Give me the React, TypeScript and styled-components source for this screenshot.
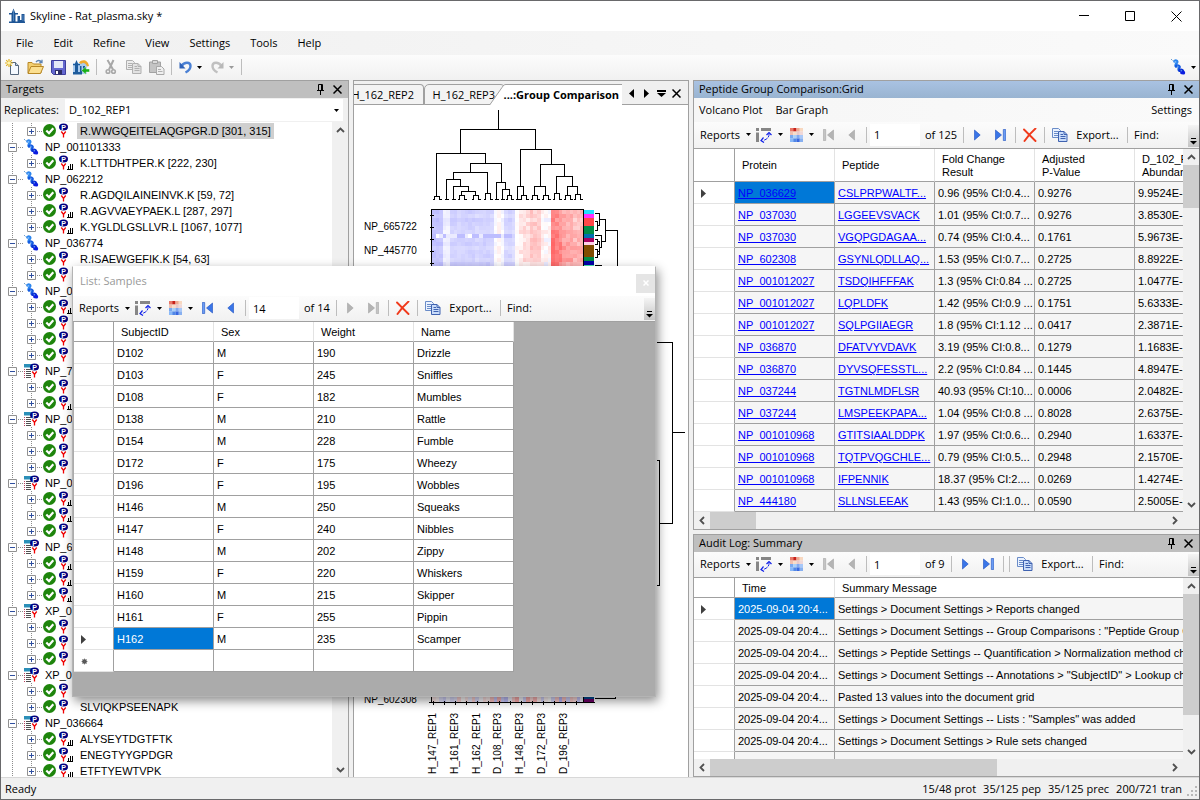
import React from 'react';
import styled, { createGlobalStyle, css } from 'styled-components';

const UI = '"Open Sans", "Noto Sans", sans-serif';
const GRID = '"Liberation Sans", Arial, sans-serif';
const LINE = '#a0a0a0';

const GlobalStyle = createGlobalStyle`
  *, *::before, *::after { box-sizing: border-box; }
  body { margin: 0; background: #fff; font-family: ${UI}; font-size: 11px; line-height: 16px; color: #000; }
  button, input, select { font: inherit; color: inherit; border: 0; border-radius: 0; margin: 0; padding: 0; background: none; }
  svg { display: block; flex: none; }
`;

/* ---------- window frame ---------- */

const Window = styled.div`
  position: relative;
  display: flex;
  flex-direction: column;
  height: 100vh;
  border: 1px solid #69696b;
  background: #f0f0f0;
  overflow: hidden;
`;

const TitleBar = styled.header`
  display: flex;
  align-items: center;
  height: 30px;
  padding-left: 8px;
  background: #fff;
  flex: none;
`;

const AppTitle = styled.h1`
  flex: 1;
  margin: 0 0 0 5px;
  font-size: 11px;
  font-weight: 400;
`;

const CaptionButton = styled.button`
  display: grid;
  place-items: center;
  width: 46px;
  height: 30px;
`;

const MenuBar = styled.nav`
  display: flex;
  align-items: center;
  gap: 20px;
  height: 24px;
  padding-left: 15px;
  background: linear-gradient(90deg, #f0f0f0, #fafafa);
  flex: none;
`;

const ToolStrip = styled.div`
  display: flex;
  align-items: center;
  height: 25px;
  padding-bottom: 1px;
  background: linear-gradient(#fcfcfc, #f1f1f1);
  flex: none;
`;

const Workspace = styled.main`
  display: grid;
  grid-template-columns: minmax(0, 348fr) minmax(0, 336fr) minmax(0, 506fr);
  gap: 4px;
  flex: 1;
  min-height: 0;
`;

const StatusBar = styled.footer`
  display: flex;
  align-items: center;
  gap: 7px;
  height: 22px;
  padding: 0 1px 0 4px;
  border-top: 1px solid #d8d8d8;
  background: #f0f0f0;
  flex: none;
  svg { margin: 6px 0 0 -2px; }
`;

const StatusMain = styled.span`
  flex: 1;
`;

/* ---------- tool buttons ---------- */

const ToolButton = styled.button<{ $w?: number }>`
  display: flex;
  align-items: center;
  justify-content: center;
  gap: 5px;
  width: ${(p) => p.$w ?? 23}px;
  height: 22px;
  white-space: nowrap;
  flex: none;
`;

const SplitButton = styled(ToolButton)`
  justify-content: flex-end;
  gap: 6px;
  padding-right: 3px;
`;

const Separator = styled.span`
  width: 6px;
  height: 16px;
  padding-left: 3px;
  flex: none;
  &::before { content: ''; display: block; width: 1px; height: 100%; background: #bdbdbd; }
`;

const Spacer = styled.span`
  flex: 1;
`;

/* ---------- docked panels ---------- */

const Panel = styled.section`
  display: flex;
  flex-direction: column;
  min-width: 0;
  min-height: 0;
  border: 1px solid ${LINE};
  border-bottom-width: 0;
  background: #f0f0f0;
  overflow: hidden;
`;

const TargetsPanel = styled(Panel)`
  border-left: 0;
`;

const RightColumn = styled.div`
  display: grid;
  grid-template-rows: minmax(0, 450fr) minmax(0, 243fr);
  gap: 4px;
  min-height: 0;
`;

const GridPanel = styled(Panel)`
  border-right: 0;
  border-bottom-width: 1px;
`;

const PanelHeader = styled.header<{ $active?: boolean }>`
  display: flex;
  align-items: flex-start;
  height: 17px;
  padding: 0 2px 0 5px;
  background: ${(p) => (p.$active ? 'linear-gradient(#a9c2e2, #99b4d1)' : '#bfbfbf')};
  flex: none;
`;

const PanelTitle = styled.h2`
  flex: 1;
  margin: 0;
  font-size: 11px;
  font-weight: 400;
  line-height: 15px;
`;

const HeaderButton = styled.button`
  display: grid;
  place-items: center;
  width: 17px;
  height: 16px;
`;

const PanelMenu = styled.nav`
  display: flex;
  align-items: center;
  gap: 13px;
  height: 24px;
  padding: 0 7px 0 5px;
  background: linear-gradient(90deg, #f6f6f6, #fafafa);
  flex: none;
`;

/* ---------- targets tree ---------- */

const ReplicateRow = styled.div`
  display: flex;
  align-items: center;
  height: 24px;
  padding: 0 5px 0 3px;
  flex: none;
`;

const ReplicateLabel = styled.label`
  width: 61px;
`;

const SelectBox = styled.div`
  position: relative;
  flex: 1;
  height: 22px;
  background: #fff;
  svg { position: absolute; right: 4px; top: 10px; pointer-events: none; }
  select { width: 100%; height: 100%; padding-left: 4px; appearance: none; outline: 0; }
`;

const Scroller = styled.div`
  display: flex;
  flex: 1;
  min-height: 0;
  background: #fff;
`;

const Tree = styled.ul`
  flex: 1;
  margin: 0;
  padding: 1px 0 0;
  list-style: none;
  min-width: 0;
  overflow: hidden;
  font-family: ${GRID};
`;

const rootLine = 'repeating-linear-gradient(#8c8c8c 0 1px, transparent 1px 2px) 11px 0 / 1px 100% no-repeat';

const TreeRow = styled.li<{ $child?: boolean; $last?: boolean }>`
  display: flex;
  align-items: center;
  height: 16px;
  padding-left: 7px;
  background: ${rootLine};
  ${(p) =>
    p.$child &&
    css`
      padding-left: 26px;
      background: ${rootLine},
        repeating-linear-gradient(#8c8c8c 0 1px, transparent 1px 2px) 30px 0 / 1px ${p.$last ? '8px' : '100%'} no-repeat;
    `}
`;

const Expander = styled.button`
  width: 9px;
  height: 9px;
  flex: none;
`;

const Dots = styled.span`
  width: 5px;
  height: 1px;
  margin: 0 1px;
  background: repeating-linear-gradient(90deg, #8c8c8c 0 1px, transparent 1px 2px);
`;

const NodeText = styled.span<{ $selected?: boolean }>`
  padding: 0 3px;
  margin-left: 3px;
  white-space: nowrap;
  background: ${(p) => (p.$selected ? '#cfcfcf' : 'transparent')};
`;

/* ---------- scroll bars ---------- */

const Bar = styled.div<{ $horizontal?: boolean }>`
  display: flex;
  flex-direction: ${(p) => (p.$horizontal ? 'row' : 'column')};
  flex: none;
  ${(p) => (p.$horizontal ? 'height: 17px; padding-right: 17px;' : 'width: 16px;')}
  background: #f0f0f0;
`;

const ArrowButton = styled.button`
  display: grid;
  place-items: center;
  width: 16px;
  height: 16px;
  flex: none;
`;

const Track = styled.div<{ $horizontal?: boolean }>`
  display: flex;
  flex-direction: ${(p) => (p.$horizontal ? 'row' : 'column')};
  flex: 1;
`;

const Thumb = styled.div<{ $share: number }>`
  flex: 0 0 ${(p) => p.$share}%;
  background: #cdcdcd;
`;

/* ---------- data grids ---------- */

const GridArea = styled.div`
  flex: 1;
  min-width: 0;
  overflow: hidden;
  background: #ababab;
`;

const Table = styled.table`
  table-layout: fixed;
  width: 0;
  border-collapse: separate;
  border-spacing: 0;
  font-family: ${GRID};
  font-size: 11px;
  line-height: 13px;
  background: #fff;
`;

const HeadCell = styled.th<{ $h: number }>`
  height: ${(p) => p.$h}px;
  padding: 1px 8px 0 7px;
  border-right: 1px solid #e3e3e3;
  border-bottom: 1px solid ${LINE};
  font-weight: 400;
  text-align: left;
  overflow: hidden;
  white-space: pre-line;
`;

const CornerCell = styled.td`
  border-right: 1px solid ${LINE};
  border-bottom: 1px solid ${LINE};
`;

const RowHead = styled.th`
  height: 22px;
  padding: 2px 0 0 7px;
  border-right: 1px solid ${LINE};
  border-bottom: 1px solid #e3e3e3;
`;

const Cell = styled.td<{ $selected?: boolean; $shaded?: boolean }>`
  height: 22px;
  padding: 2px 0 0 3px;
  border-right: 1px solid ${LINE};
  border-bottom: 1px solid ${LINE};
  white-space: nowrap;
  overflow: hidden;
  background: ${(p) => (p.$selected ? '#0078d7' : p.$shaded ? '#f5f5f5' : '#fff')};
  color: ${(p) => (p.$selected ? '#fff' : '#000')};
  a { color: #0000ff; }
`;

/* ---------- navigator bar ---------- */

const NavBar = styled(ToolStrip)<{ $h: number }>`
  height: ${(p) => p.$h}px;
  padding-left: 1px;
  border-bottom: 1px solid ${LINE};
`;

const PositionInput = styled.input`
  width: 50px;
  height: 22px;
  margin-left: 1px;
  padding-left: 4px;
  background: #fff;
  outline: 0;
`;

const CountText = styled.span<{ $w: number }>`
  width: ${(p) => p.$w}px;
  padding-left: 5px;
  white-space: nowrap;
  flex: none;
`;

const FindText = styled.span`
  padding-left: 4px;
`;

const Overflow = styled.button`
  display: grid;
  place-items: end center;
  align-self: flex-end;
  width: 11px;
  height: 22px;
  padding-bottom: 2px;
  background: linear-gradient(#f4f4f4, #c4c4c4);
`;

/* ---------- document tabs ---------- */

const TabStrip = styled.div`
  display: flex;
  align-items: flex-end;
  height: 24px;
  background: linear-gradient(${LINE}, ${LINE}) 0 100% / 100% 1px no-repeat, #f0f0f0;
  flex: none;
`;

const Tab = styled.button<{ $w: number }>`
  display: flex;
  justify-content: flex-end;
  align-items: center;
  width: ${(p) => p.$w}px;
  height: 21px;
  padding-right: 9px;
  border: 1px solid ${LINE};
  border-left-width: 0;
  border-radius: 0 4px 0 0;
  background: #f3f3f3;
  overflow: hidden;
  white-space: nowrap;
  flex: none;
`;

const SecondTab = styled(Tab)`
  border-left-width: 1px;
  border-radius: 5px 4px 0 0;
`;

const ActiveTab = styled.button`
  display: flex;
  align-items: center;
  height: 21px;
  margin-left: -15px;
  font-weight: 700;
  white-space: nowrap;
  flex: none;
`;

const ActiveTabText = styled.span`
  display: flex;
  align-items: center;
  justify-content: flex-end;
  width: 116px;
  height: 21px;
  padding-right: 3px;
  border-top: 1px solid ${LINE};
  background: #fff;
`;

const TabTools = styled.div`
  display: flex;
  align-self: center;
  padding-left: 2px;
  button { display: grid; place-items: center; width: 15px; height: 18px; }
`;

const ChartArea = styled.div`
  flex: 1;
  min-height: 0;
  background: #fff;
  overflow: hidden;
`;

/* ---------- floating list window ---------- */

const Floating = styled.section`
  position: absolute;
  left: 71px;
  top: 265px;
  width: 584px;
  display: flex;
  flex-direction: column;
  background: #ababab;
  border: 1px solid #b4b4b4;
  border-top-color: #fff;
  box-shadow: 2px 4px 10px rgba(0, 0, 0, 0.45);
`;

const FloatingTitle = styled.header`
  display: flex;
  align-items: center;
  height: 29px;
  padding: 0 0 2px 7px;
  background: #fff;
  color: #999;
`;

const CloseBox = styled.button`
  display: grid;
  place-items: center;
  width: 19px;
  height: 19px;
  margin-top: 5px;
  background: #e5e5e5;
`;

const FloatingBody = styled.div`
  padding: 0 0 24px 1px;
`;

/* ---------- icons ---------- */

const Caret = ({ color = '#000' }: { color?: string }) => (
  <svg width="5" height="3" viewBox="0 0 5 3"><path d="M0 0h5L2.5 3z" fill={color} /></svg>
);

const CloseIcon = () => (
  <svg width="9" height="9" viewBox="0 0 9 9"><path d="M.5.5l8 8M8.500 .5l-8 8" stroke="#000" strokeWidth="1.5" fill="none" /></svg>
);

const PinIcon = () => (
  <svg width="7" height="11" viewBox="0 0 7 11">
    <path d="M1.500 6V.5h4V6M4.500 .5V6M0 6.500h7M3.500 7v4" stroke="#000" fill="none" />
  </svg>
);

const Chevron = ({ dir }: { dir: 'up' | 'down' | 'left' | 'right' }) => {
  const d = { up: 'M1 6l3.500-3.500L8 6', down: 'M1 3l3.500 3.500L8 3', left: 'M6 1L2.500 4.500L6 8', right: 'M3 1l3.500 3.500L3 8' }[dir];
  return <svg width="9" height="9" viewBox="0 0 9 9"><path d={d} stroke="#505050" strokeWidth="1.8" fill="none" /></svg>;
};

const SkylineLogo = () => (
  <svg width="16" height="16" viewBox="0 0 16 16">
    <path d="M0 13.500h16V15H0zM2.500 5.500L4.500 .5l2 5v8h-4zM0 5h9v1.500H0zM8.500 8H11v4h1.500V6H15.500v8h-7z" fill="#1e5595" />
    <path d="M4.500 2v11M14 7v6" stroke="#5c90c8" strokeWidth=".8" />
  </svg>
);

const NewIcon = () => (
  <svg width="16" height="16" viewBox="0 0 16 16">
    <path d="M5.500 3.500h5l3 3v9h-8z" fill="#f4f9ff" stroke="#55677c" />
    <path d="M10.500 3.500v3h3" fill="#bcd0e8" stroke="#55677c" />
    <path d="M4 0v8M0 4h8M1.200 1.200l5.600 5.600M6.800 1.200L1.200 6.800" stroke="#e0b020" strokeWidth="1.200" />
    <circle cx="4" cy="4" r="1.800" fill="#fff6b0" />
  </svg>
);

const OpenIcon = () => (
  <svg width="17" height="16" viewBox="0 0 17 16">
    <path d="M1 3.500h4l1.500 1.500H14v9H1z" fill="#f3cf70" stroke="#b78726" />
    <path d="M4 7.500h12.500L13.500 14.500H1z" fill="#fbdf90" stroke="#b78726" />
    <path d="M9 3c1.500-2 4-2 5.500 0M15 .8v2.700h-2.700" stroke="#5f86b5" strokeWidth="1.300" fill="none" />
  </svg>
);

const SaveIcon = () => (
  <svg width="15" height="15" viewBox="0 0 15 15">
    <path d="M.5.5h14v14h-12l-2-2z" fill="#6468d0" stroke="#3e3f9c" />
    <path d="M3 1h9v7H3z" fill="#e4e8f8" />
    <path d="M4 10h7v4.500H4z" fill="#2e2f66" />
    <path d="M5 11h2v3H5z" fill="#fff" />
  </svg>
);

const StartIcon = () => (
  <svg width="17" height="16" viewBox="0 0 17 16">
    <path d="M0 4h14v11H0z" fill="#a9cbee" />
    <path d="M6 3.500c3-4 9-3 10 3.500l-2 .5C13 4 10 3 8 5z" fill="#f0a92c" />
    <path d="M0 13h9v2.500H0zM2 4.500L3.500 1 5 4.500V13H2zM0 5h7v1.200H0zM7 7h1.500v4H10V7h2v3.500L8.500 13H7z" fill="#1e5c9c" />
    <path d="M8.500 11.500L13 7.500v2.500h3.500v3H13v2.500z" fill="#18b018" stroke="#fff" strokeWidth=".4" />
  </svg>
);

const CutIcon = () => (
  <svg width="12" height="16" viewBox="0 0 12 16">
    <path d="M2.500 1L8 10.500M8.500 1L4 10.500" stroke="#a8a8a8" strokeWidth="2" />
    <circle cx="3" cy="12.500" r="1.800" fill="none" stroke="#a8a8a8" strokeWidth="1.600" />
    <circle cx="8.500" cy="12.500" r="1.800" fill="none" stroke="#a8a8a8" strokeWidth="1.600" />
  </svg>
);

const CopyIcon = ({ muted }: { muted?: boolean }) => {
  const edge = muted ? '#b0b0b0' : '#6a8cc8';
  const fill = muted ? '#ececec' : '#eaf2ff';
  const front = muted ? '#e2e2e2' : '#c9dcfa';
  return (
    <svg width="16" height="14" viewBox="0 0 16 14">
      <path d="M.5.5h6l2 2v7h-8z" fill={fill} stroke={edge} />
      <path d="M2 3.500h4M2 5.500h4M2 7.500h4" stroke={edge} />
      <path d="M6.500 3.500h5.500l3 3v7H6.500z" fill={front} stroke={muted ? edge : '#3f62b0'} />
      <path d="M12 3.500v3H15M8.500 6.500h2.500M8.500 8.500h5M8.500 10.500h5" stroke={muted ? edge : '#3f62b0'} fill="none" />
    </svg>
  );
};

const PasteIcon = () => (
  <svg width="16" height="15" viewBox="0 0 16 15">
    <path d="M.5 2h11v10.500H.5z" fill="#c4c4c4" stroke="#a2a2a2" />
    <path d="M3.500.5h5v3h-5z" fill="#dadada" stroke="#a2a2a2" />
    <path d="M7.500 6.500h5l2.500 2.500v5.500H7.500z" fill="#efefef" stroke="#a8a8a8" />
    <path d="M9 9.500h3M9 11.500h4.500" stroke="#b0b0b0" />
  </svg>
);

const UndoIcon = ({ muted }: { muted?: boolean }) => (
  <svg width="13" height="13" viewBox="0 0 13 13">
    <g transform={muted ? 'matrix(-1 0 0 1 13 0)' : undefined}>
      <path d="M2.500 5C5.500 .5 11.500 1 11.500 5c0 3-2 5-5 6.500" fill="none" stroke={muted ? '#c0c0c0' : '#4a80d4'} strokeWidth="2.400" />
      <path d="M.5 1v6.500h6z" fill={muted ? '#b8b8b8' : '#2f62b8'} />
    </g>
  </svg>
);

const HelixIcon = () => (
  <svg width="15" height="16" viewBox="0 0 15 16">
    <g fill="none" strokeLinecap="round">
      <path d="M3.500 2.300C5 1 6.800 2 6 3.500S4 6 5 7" stroke="#2c86ee" strokeWidth="2.600" />
      <path d="M5 7.200c2-1 4-.2 3.200 1.600S7.500 11 8.500 11.500" stroke="#155ce0" strokeWidth="2.800" />
      <path d="M8.800 11.500c1.700-1 3.400 0 2.700 1.500" stroke="#0a30d4" strokeWidth="3" />
      <path d="M10.800 13.600l1.700.2" stroke="#0a1ce0" strokeWidth="3.400" />
      <path d="M4 2.500l1 .3M6.500 7.200l.8.5M10 11.500l.6.4" stroke="#7fbcff" strokeWidth="1" />
    </g>
    <path d="M0 .5h1M1.500 1.500h1" stroke="#70a0d0" />
  </svg>
);

const PepMark = ({ x }: { x: number }) => (
  <g fontFamily="Liberation Sans, sans-serif" fontWeight="700" fontSize="7" textAnchor="middle">
    <ellipse cx={x} cy="4" rx="4.500" ry="3.600" fill="#000080" />
    <text x={x} y="6.500" fill="#fff">P</text>
    <path d={`M${x - 2.200} 8.500L${x} 11.500L${x + 2.200} 8.500M${x} 11v3.500`} stroke="#f00000" strokeWidth="1.300" fill="none" />
  </g>
);

const ListIcon = () => (
  <svg width="15" height="16" viewBox="0 0 15 16">
    <path d="M0 1h9v3.500H0z" fill="#2b8fb8" />
    <path d="M2 6.500h5M2 8.500h5M2 10.500h5M2 12.500h5M2 14.500h5" stroke="#505050" />
    <path d="M0 6.500h1M0 8.500h1M0 10.500h1M0 12.500h1M0 14.500h1" stroke="#c04060" />
    <PepMark x={10.5} />
  </svg>
);

const PeptideIcon = ({ bars }: { bars?: boolean }) => (
  <svg width="31" height="16" viewBox="0 0 31 16">
    <circle cx="6.500" cy="7.500" r="6.500" fill="#1e850c" />
    <path d="M3.300 7.500l2.700 2.700 4.300-5" stroke="#fff" strokeWidth="2.200" fill="none" />
    <PepMark x={20.5} />
    {bars && <path d="M24 14.500h6M25.500 14v-3M27.500 14V9M29.500 14v-5" stroke="#000" />}
  </svg>
);

const PlusBox = ({ open }: { open?: boolean }) => (
  <svg width="9" height="9" viewBox="0 0 9 9">
    <path d="M.5.5h8v8h-8z" fill="#fff" stroke="#919191" />
    <path d={open ? 'M2 4.500h5' : 'M2 4.500h5M4.500 2v5'} stroke="#2f4fa0" />
  </svg>
);

const PivotIcon = () => (
  <svg width="16" height="16" viewBox="0 0 16 16">
    <path d="M0 1h3v3H0zM5 1h10v3H5zM0 5.500h3V15H0z" fill="#868686" />
    <path d="M13 6.500c.5 3.500-2 6-6 7" stroke="#1020e8" fill="none" strokeDasharray="4 1" />
    <path d="M10.500 8L13 5.500 15.500 8M7.500 10.500L5 13.500l3 2" stroke="#1020e8" strokeWidth="1.200" fill="none" />
  </svg>
);

const HEAT = ['#e87868', '#c82018', '#f0a890', '#f8d8c0', '#f0c0b0', '#f8dcc8', '#e8c8c8', '#f0d8d8', '#78a8f0', '#a8d0f8', '#80a8f0', '#a8c8f8', '#88b8f8', '#5088e8', '#3868e0', '#88b0f0'];
const HeatIcon = () => (
  <svg width="13" height="14" viewBox="0 0 13 14">
    {HEAT.map((c, i) => <rect key={i} x={(i % 4) * 3.25} y={Math.floor(i / 4) * 3.5} width="3.300" height="3.600" fill={c} />)}
  </svg>
);

const NavIcon = ({ kind, muted }: { kind: 'first' | 'prev' | 'next' | 'last'; muted?: boolean }) => {
  const fill = muted ? '#b4b4b4' : '#3a76e8';
  const edge = muted ? '#a4a4a4' : '#1c4fc0';
  const single = kind === 'prev' || kind === 'next';
  const flip = kind === 'next' || kind === 'last';
  const w = single ? 7 : 11;
  return (
    <svg width={w} height="12" viewBox={`0 0 ${w} 12`}>
      <g transform={flip ? `matrix(-1 0 0 1 ${w} 0)` : undefined}>
        {single ? <path d="M6.500 1v10L.8 6z" fill={fill} stroke={edge} strokeWidth=".6" /> : (
          <>
            <path d="M.3.5h2.400v11H.3z" fill={muted ? '#c4c4c4' : '#6a9cf4'} stroke={edge} strokeWidth=".6" />
            <path d="M10.500 1v10L4.500 6z" fill={fill} stroke={edge} strokeWidth=".6" />
          </>
        )}
      </g>
    </svg>
  );
};

const DeleteIcon = () => (
  <svg width="14" height="14" viewBox="0 0 14 14">
    <path d="M1 1.500l11.500 11.500M12.500 .5C8 4.500 4 9 1.500 13" stroke="#f03a1c" strokeWidth="1.900" strokeLinecap="round" fill="none" />
  </svg>
);

const OverflowIcon = () => (
  <svg width="7" height="7" viewBox="0 0 7 7"><path d="M1 .5h5" stroke="#000" /><path d="M0 3h7L3.500 6.500z" fill="#000" /></svg>
);

const CurrentMark = () => (
  <svg width="5" height="9" viewBox="0 0 5 9"><path d="M0 0l5 4.500L0 9z" fill="#404040" /></svg>
);

const NewRowMark = () => (
  <svg width="7" height="7" viewBox="0 0 7 7">
    <circle cx="3.500" cy="3.500" r="2.300" fill="#404040" />
    <path d="M3.500 .5v6M.5 3.500h6M1.300 1.300l4.400 4.400M5.700 1.300L1.300 5.700" stroke="#606060" strokeWidth=".7" />
  </svg>
);

/* ---------- data ---------- */

type Node = { kind: 'helix' | 'list' | 'pep'; text?: string; bars?: boolean; selected?: boolean };
const helix = (text: string): Node => ({ kind: 'helix', text });
const list = (text: string): Node => ({ kind: 'list', text });
const pep = (text = '', bars = false, selected = false): Node => ({ kind: 'pep', text, bars, selected });

const NODES: Node[] = [
  pep('R.WWGQEITELAQGPGR.D [301, 315]', false, true),
  helix('NP_001101333'), pep('K.LTTDHTPER.K [222, 230]', true),
  helix('NP_062212'), pep('R.AGDQILAINEINVK.K [59, 72]'), pep('R.AGVVAEYPAEK.L [287, 297]', true), pep('K.YGLDLGSLLVR.L [1067, 1077]', true),
  helix('NP_036774'), pep('R.ISAEWGEFIK.K [54, 63]'), pep(),
  helix('NP_0'), pep('', true), pep(), pep(), pep(),
  list('NP_7'), pep(), pep('', true),
  list('NP_0'), pep(), pep(), pep(),
  list('NP_0'), pep('', true), pep('', true), pep(),
  list('NP_6'), pep('', true), pep('', true), pep('', true),
  list('XP_0'), pep(), pep(), pep(),
  list('XP_0'), pep(), pep('SLVIQKPSEENAPK'),
  list('NP_036664'), pep('ALYSEYTDGTFTK', true), pep('ENEGTYYGPDGR', true), pep('ETFTYEWTVPK', true),
];

const SAMPLES = [
  ['D102', 'M', '190', 'Drizzle'], ['D103', 'F', '245', 'Sniffles'], ['D108', 'F', '182', 'Mumbles'],
  ['D138', 'M', '210', 'Rattle'], ['D154', 'M', '228', 'Fumble'], ['D172', 'F', '175', 'Wheezy'],
  ['D196', 'F', '195', 'Wobbles'], ['H146', 'M', '250', 'Squeaks'], ['H147', 'F', '240', 'Nibbles'],
  ['H148', 'M', '202', 'Zippy'], ['H159', 'F', '220', 'Whiskers'], ['H160', 'M', '215', 'Skipper'],
  ['H161', 'F', '255', 'Pippin'], ['H162', 'M', '235', 'Scamper'], ['', '', '', ''],
];

const PEPTIDES = [
  ['NP_036629', 'CSLPRPWALTF...', '0.96 (95% CI:0.4...', '0.9276', '9.9524E-3'],
  ['NP_037030', 'LGGEEVSVACK', '1.01 (95% CI:0.7...', '0.9276', '3.8530E-2'],
  ['NP_037030', 'VGQPGDAGAA...', '0.74 (95% CI:0.4...', '0.1761', '5.9673E-3'],
  ['NP_602308', 'GSYNLQDLLAQ...', '1.53 (95% CI:0.7...', '0.2725', '8.8922E-3'],
  ['NP_001012027', 'TSDQIHFFFAK', '1.3 (95% CI:0.84 ...', '0.2725', '1.0477E-2'],
  ['NP_001012027', 'LQPLDFK', '1.42 (95% CI:0.9 ...', '0.1751', '5.6333E-3'],
  ['NP_001012027', 'SQLPGIIAEGR', '1.8 (95% CI:1.12 ...', '0.0417', '2.3871E-3'],
  ['NP_036870', 'DFATVYVDAVK', '3.19 (95% CI:0.8...', '0.1279', '1.1683E-2'],
  ['NP_036870', 'DYVSQFESSTL...', '2.2 (95% CI:0.84 ...', '0.1445', '4.8947E-3'],
  ['NP_037244', 'TGTNLMDFLSR', '40.93 (95% CI:10...', '0.0006', '2.0482E-3'],
  ['NP_037244', 'LMSPEEKPAPA...', '1.04 (95% CI:0.8 ...', '0.8028', '2.6375E-3'],
  ['NP_001010968', 'GTITSIAALDDPK', '1.97 (95% CI:0.6...', '0.2940', '1.6337E-3'],
  ['NP_001010968', 'TQTPVQGCHLE...', '0.79 (95% CI:0.5...', '0.2948', '2.1570E-3'],
  ['NP_001010968', 'IFPENNIK', '18.37 (95% CI:2....', '0.0269', '1.4274E-3'],
  ['NP_444180', 'SLLNSLEEAK', '1.43 (95% CI:1.0...', '0.0590', '2.5005E-3'],
];

const AUDIT = [
  'Settings > Document Settings > Reports changed',
  'Settings > Document Settings -- Group Comparisons : "Peptide Group Comparison" was added',
  'Settings > Peptide Settings -- Quantification > Normalization method changed',
  'Settings > Document Settings -- Annotations > "SubjectID" > Lookup changed',
  'Pasted 13 values into the document grid',
  'Settings > Document Settings -- Lists : "Samples" was added',
  'Settings > Document Settings > Rule sets changed',
  'Settings > Document Settings -- Annotations changed',
].map((t) => ['2025-09-04 20:4...', t]);

/* ---------- shared pieces ---------- */

const DockHeader = ({ title, active }: { title: string; active?: boolean }) => (
  <PanelHeader $active={active}>
    <PanelTitle>{title}</PanelTitle>
    <HeaderButton aria-label="Auto hide"><PinIcon /></HeaderButton>
    <HeaderButton aria-label="Close"><CloseIcon /></HeaderButton>
  </PanelHeader>
);

const ScrollBar = ({ share, horizontal }: { share: number; horizontal?: boolean }) => (
  <Bar $horizontal={horizontal}>
    <ArrowButton aria-label="Scroll back"><Chevron dir={horizontal ? 'left' : 'up'} /></ArrowButton>
    <Track $horizontal={horizontal}><Thumb $share={share} /></Track>
    <ArrowButton aria-label="Scroll forward"><Chevron dir={horizontal ? 'right' : 'down'} /></ArrowButton>
  </Bar>
);

type NavProps = { at: string; total: string; totalWidth: number; height: number; atEnd?: boolean; canDelete?: boolean };
const Navigator = ({ at, total, totalWidth, height, atEnd = false, canDelete }: NavProps) => (
  <NavBar $h={height}>
    <SplitButton $w={59}>Reports <Caret /></SplitButton>
    <SplitButton $w={32} aria-label="Pivot"><PivotIcon /><Caret /></SplitButton>
    <SplitButton $w={31} aria-label="Heat map"><HeatIcon /><Caret /></SplitButton>
    <ToolButton aria-label="First"><NavIcon kind="first" muted={!atEnd} /></ToolButton>
    <ToolButton aria-label="Previous"><NavIcon kind="prev" muted={!atEnd} /></ToolButton>
    <Separator />
    <PositionInput aria-label="Position" defaultValue={at} />
    <CountText $w={totalWidth}>of {total}</CountText>
    <Separator />
    <ToolButton aria-label="Next"><NavIcon kind="next" muted={atEnd} /></ToolButton>
    <ToolButton aria-label="Last"><NavIcon kind="last" muted={atEnd} /></ToolButton>
    <Separator />
    {canDelete && <ToolButton aria-label="Delete"><DeleteIcon /></ToolButton>}
    <Separator />
    <ToolButton $w={77}><CopyIcon />&nbsp;Export...</ToolButton>
    <Separator />
    <FindText>Find:</FindText>
    <Spacer />
    <Overflow aria-label="More"><OverflowIcon /></Overflow>
  </NavBar>
);

type GridProps = {
  columns: string[]; widths: number[]; rows: string[][]; current: number;
  headHeight: number; links?: number; shaded?: boolean; rowHeadWidth: number; newRow?: boolean;
};
const DataGrid = ({ columns, widths, rows, current, headHeight, links = 0, shaded, rowHeadWidth, newRow }: GridProps) => (
  <Table>
    <colgroup>
      <col width={rowHeadWidth} />
      {widths.map((w, i) => <col key={i} width={w} />)}
    </colgroup>
    <thead>
      <tr><CornerCell />{columns.map((c) => <HeadCell key={c} scope="col" $h={headHeight}>{c}</HeadCell>)}</tr>
    </thead>
    <tbody>
      {rows.map((row, r) => (
        <tr key={r}>
          <RowHead scope="row">{r === current ? <CurrentMark /> : newRow && r === rows.length - 1 ? <NewRowMark /> : null}</RowHead>
          {row.map((v, c) => (
            <Cell key={c} $shaded={shaded} $selected={r === current && c === 0}>
              {c < links ? <a href="#grid">{v}</a> : v}
            </Cell>
          ))}
        </tr>
      ))}
    </tbody>
  </Table>
);

/* ---------- cluster heat map ---------- */

/* Each leaf pair hangs from a bracket: [left, right, top]. */
const PAIRS = [
  [434, 439, 196], [459, 464, 195], [473, 478, 195], [485, 490, 193], [507, 511, 195], [521, 526, 195],
  [532, 537, 195], [543, 548, 195], [554, 559, 193], [565, 570, 195], [575, 580, 194],
];
/* Brackets of the column tree: [left, left foot, right, right foot, top]. */
const FORKS = [
  [460, 153, 535, 149, 129], [436, 196, 485, 163, 153], [470, 172, 501, 182, 163], [453, 179, 487, 193, 172],
  [446, 199, 460, 186, 179], [453, 199, 468, 191, 186], [461, 195, 475, 195, 191], [496, 199, 505, 189, 182],
  [502, 199, 509, 195, 189], [520, 186, 551, 164, 149], [517, 199, 523, 195, 186], [540, 186, 564, 176, 164],
  [534, 195, 545, 195, 186], [556, 193, 572, 186, 176], [567, 195, 577, 194, 186],
];
const LEAVES = [446, 453, 496, 502, 517];

/* Mean value of each of the 42 sample columns, from -1 (blue) to 1 (red). */
const COLUMN_MEANS = [
  -0.24, -0.24, -0.22, -0.07, -0.07, -0.18, -0.18, -0.17, -0.18, -0.18, -0.19, -0.19, -0.16, -0.18, -0.18, -0.18, -0.16,
  -0.02, 0.03, -0.03, -0.16, -0.17, -0.15, 0.0, 0.09, 0.11, 0.12, 0.21, 0.2, 0.16, 0.05, 0.01, 0.0,
  0.48, 0.44, 0.42, 0.31, 0.29, 0.28, 0.22, 0.25, 0.24,
];
const shade = (v: number) => {
  const t = Math.round(255 * (1 - Math.min(0.7, Math.abs(v))));
  return v < 0 ? `rgb(${t},${t},255)` : `rgb(255,${t},${t})`;
};
const noise = (r: number, c: number) => {
  const s = Math.sin(r * 91.7 + c * 37.3 + 4.1) * 43758.5453;
  return s - Math.floor(s) - 0.5;
};
const ROW_SHIFT = [0, 0.02, -0.02, 0, 0.01, 0.02, 0, 0, -0.01, 0.03, 0.01, 0, 0.02, -0.02];
const cellValue = (r: number, c: number) => {
  if (r === 6) {
    if (c === 1 || c === 10) return 0;
    if (c < 22 && noise(r, c) > 0) return -0.26;
    if (c < 22) return -0.08;
  }
  const extra = r > 5 && c > 32 ? 0.06 : 0;
  return COLUMN_MEANS[c] + ROW_SHIFT[r] + extra + noise(r, c) * (c > 23 ? 0.16 : 0.05);
};

const STRIP: [number, number, string][] = [
  [210, 4, '#20e0ff'], [214, 4, '#ff30ff'], [218, 8, '#ff4848'], [226, 8, '#008c48'], [234, 4, '#0070b0'],
  [238, 4, '#a80060'], [242, 3, '#ffd0e8'], [245, 12, '#804c00'], [257, 4, '#008c48'], [261, 4, '#0000a8'],
  [265, 6, '#50e8b0'], [694, 5, '#004c98'], [699, 4, '#700068'],
];
const SAMPLE_LABELS = ['H_147_REP1', 'H_161_REP3', 'H_162_REP1', 'D_108_REP3', 'H_148_REP3', 'D_172_REP3', 'D_196_REP3'];

const ClusterChart = () => (
  <svg width="334" height="672" viewBox="354 105 334 672" role="img" aria-label="Group comparison heat map">
    <g shapeRendering="crispEdges">
      {ROW_SHIFT.map((_, r) =>
        COLUMN_MEANS.map((__, c) => (
          <rect key={`${r}-${c}`} x={432 + c * 3.62} y={210 + r * 4} width="3.700" height="4" fill={shade(cellValue(r, c))} />
        )),
      )}
      {COLUMN_MEANS.map((_, c) => (
        <rect key={c} x={432 + c * 3.62} y="696" width="3.700" height="6" fill={shade(noise(3, c) * (c > 14 ? 0.7 : 0.35))} />
      ))}
      {STRIP.map(([y, h, c]) => <rect key={y} x="584" y={y} width="10" height={h} fill={c} />)}
    </g>
    <g fill="none" stroke="#000" shapeRendering="crispEdges" transform="translate(.5 .5)">
      <path d="M498 109V129" />
      {FORKS.map(([l, lb, r, rb, t]) => <path key={`${l}-${t}`} d={`M${l} ${lb}V${t}H${r}V${rb}`} />)}
      {PAIRS.map(([l, r, t]) => <path key={l} d={`M${l - 2} 199H${l}V${t}H${r}V199H${r + 2}`} />)}
      {LEAVES.map((x) => <path key={x} d={`M${x - 2} 199H${x + 2}`} />)}
      <path d="M431 702V209H583V702M428 702H594" />
      {[215, 227, 239, 251, 263].map((y) => <path key={y} d={`M429 ${y}H433`} />)}
      {Array.from({ length: 14 }, (_, i) => <path key={i} d={`M${433 + i * 11} 700V704`} />)}
      <path d="M594 213H599V225H596M599 219H605V241M594 221H597V230H594M605 230H617V270" />
      <path d="M594 235H601V247M601 241H605M594 239H597V244H594M597 241H599V251H596M594 249H597V257H594M597 254H599V247H601" />
      <path d="M594 265H601" />
      <path d="M594 698H615V600M656 342H672V523H659M672 432H684M656 460H659V585H656" />
    </g>
    <g fontFamily="Liberation Sans, Arial, sans-serif" fontSize="10">
      <text x="364" y="230">NP_665722</text>
      <text x="364" y="254">NP_445770</text>
      <text x="364" y="703">NP_602308</text>
      {SAMPLE_LABELS.map((t, i) => {
        const x = 436 + Math.round(i * 21.8);
        return <text key={t} x={x} y="774" transform={`rotate(-90 ${x} 774)`}>{t}</text>;
      })}
    </g>
  </svg>
);

/* ---------- page ---------- */

const Targets = () => (
  <TargetsPanel>
    <DockHeader title="Targets" />
    <ReplicateRow>
      <ReplicateLabel htmlFor="replicate">Replicates:</ReplicateLabel>
      <SelectBox>
        <select id="replicate" defaultValue="D_102_REP1"><option>D_102_REP1</option></select>
        <Caret />
      </SelectBox>
    </ReplicateRow>
    <Scroller>
      <Tree>
        {NODES.map((n, i) => {
          const child = n.kind === 'pep';
          const last = child && NODES[i + 1] !== undefined && NODES[i + 1].kind !== 'pep';
          return (
            <TreeRow key={i} $child={child} $last={last}>
              <Expander aria-label={child ? 'Expand' : 'Collapse'}><PlusBox open={!child} /></Expander>
              <Dots />
              {n.kind === 'helix' && <HelixIcon />}
              {n.kind === 'list' && <ListIcon />}
              {child && <PeptideIcon bars={n.bars} />}
              {n.text && <NodeText $selected={n.selected}>{n.text}</NodeText>}
            </TreeRow>
          );
        })}
      </Tree>
      <ScrollBar share={0} />
    </Scroller>
  </TargetsPanel>
);

const Documents = () => (
  <Panel>
    <TabStrip>
      <Tab $w={70}>H_162_REP2</Tab>
      <SecondTab $w={81}>H_162_REP3</SecondTab>
      <ActiveTab>
        <svg width="16" height="21" viewBox="0 0 16 21">
          <path d="M0 21L12 3.500C13.500 1 14.500 .5 16 .5V21z" fill="#fff" />
          <path d="M0 20.500L12 3.500C13.500 1 14.500 .5 16 .5" fill="none" stroke={LINE} />
        </svg>
        <ActiveTabText>...:Group Comparison</ActiveTabText>
      </ActiveTab>
      <TabTools>
        <button aria-label="Previous tab"><svg width="5" height="9" viewBox="0 0 5 9"><path d="M5 0v9L0 4.500z" /></svg></button>
        <button aria-label="Next tab"><svg width="5" height="9" viewBox="0 0 5 9"><path d="M0 0v9l5-4.500z" /></svg></button>
        <button aria-label="Tab list"><svg width="9" height="7" viewBox="0 0 9 7"><path d="M0 0h9v2H0zM0 3h9L4.500 7z" /></svg></button>
        <button aria-label="Close tab"><CloseIcon /></button>
      </TabTools>
    </TabStrip>
    <ChartArea><ClusterChart /></ChartArea>
  </Panel>
);

const App = () => (
  <>
    <GlobalStyle />
    <Window>
      <TitleBar>
        <SkylineLogo />
        <AppTitle>Skyline - Rat_plasma.sky *</AppTitle>
        <CaptionButton aria-label="Minimize"><svg width="10" height="10" viewBox="0 0 10 10"><path d="M0 4.500h10" stroke="#000" /></svg></CaptionButton>
        <CaptionButton aria-label="Maximize"><svg width="10" height="10" viewBox="0 0 10 10"><path d="M.5.5h9v9h-9z" fill="none" stroke="#000" /></svg></CaptionButton>
        <CaptionButton aria-label="Close"><svg width="11" height="11" viewBox="0 0 11 11"><path d="M.5.5l10 10M10.500 .5l-10 10" stroke="#000" /></svg></CaptionButton>
      </TitleBar>
      <MenuBar>
        {['File', 'Edit', 'Refine', 'View', 'Settings', 'Tools', 'Help'].map((m) => <button key={m}>{m}</button>)}
      </MenuBar>
      <ToolStrip>
        <ToolButton aria-label="New"><NewIcon /></ToolButton>
        <ToolButton aria-label="Open"><OpenIcon /></ToolButton>
        <ToolButton aria-label="Save"><SaveIcon /></ToolButton>
        <ToolButton aria-label="Start page"><StartIcon /></ToolButton>
        <Separator />
        <ToolButton aria-label="Cut"><CutIcon /></ToolButton>
        <ToolButton aria-label="Copy"><CopyIcon muted /></ToolButton>
        <ToolButton aria-label="Paste"><PasteIcon /></ToolButton>
        <Separator />
        <ToolButton $w={32} aria-label="Undo"><UndoIcon /><Caret /></ToolButton>
        <ToolButton $w={32} aria-label="Redo"><UndoIcon muted /><Caret color="#9a9a9a" /></ToolButton>
        <Separator />
        <Spacer />
        <ToolButton $w={32} aria-label="Targets"><HelixIcon /><Caret /></ToolButton>
      </ToolStrip>
      <Workspace>
        <Targets />
        <Documents />
        <RightColumn>
          <GridPanel>
            <DockHeader title="Peptide Group Comparison:Grid" active />
            <PanelMenu>
              <button>Volcano Plot</button>
              <button>Bar Graph</button>
              <Spacer />
              <button>Settings</button>
            </PanelMenu>
            <Navigator at="1" total="125" totalWidth={40} height={27} canDelete />
            <Scroller>
              <GridArea>
                <DataGrid
                  columns={['Protein', 'Peptide', 'Fold Change\nResult', 'Adjusted\nP-Value', 'D_102_REP1\nAbundance']}
                  widths={[100, 100, 100, 100, 100]}
                  rows={PEPTIDES} current={0} headHeight={33} links={2} shaded rowHeadWidth={41}
                />
              </GridArea>
              <ScrollBar share={13} />
            </Scroller>
            <ScrollBar share={10} horizontal />
          </GridPanel>
          <GridPanel>
            <DockHeader title="Audit Log: Summary" />
            <Navigator at="1" total="9" totalWidth={28} height={26} />
            <Scroller>
              <GridArea>
                <DataGrid columns={['Time', 'Summary Message']} widths={[100, 600]} rows={AUDIT} current={0} headHeight={20} shaded rowHeadWidth={41} />
              </GridArea>
              <ScrollBar share={81} />
            </Scroller>
            <ScrollBar share={63} horizontal />
          </GridPanel>
        </RightColumn>
      </Workspace>
      <StatusBar>
        <StatusMain>Ready</StatusMain>
        <span>15/48 prot</span>
        <span>35/125 pep</span>
        <span>35/125 prec</span>
        <span>200/721 tran</span>
        <svg width="11" height="11" viewBox="0 0 11 11">
          <path d="M8 0h2v2H8zM4 4h2v2H4zM8 4h2v2H8zM0 8h2v2H0zM4 8h2v2H4zM8 8h2v2H8z" fill="#b8b8b8" />
        </svg>
      </StatusBar>
      <Floating>
        <FloatingTitle>
          <span>List: Samples</span>
          <Spacer />
          <CloseBox aria-label="Close list">
            <svg width="6" height="6" viewBox="0 0 6 6"><path d="M.5.5l5 5M5.500 .5l-5 5" stroke="#fff" strokeWidth="1.500" /></svg>
          </CloseBox>
        </FloatingTitle>
        <Navigator at="14" total="14" totalWidth={34} height={26} atEnd canDelete />
        <FloatingBody>
          <DataGrid
            columns={['SubjectID', 'Sex', 'Weight', 'Name']} widths={[100, 100, 100, 100]}
            rows={SAMPLES} current={13} headHeight={20} rowHeadWidth={40} newRow
          />
        </FloatingBody>
      </Floating>
    </Window>
  </>
);

export default App;
